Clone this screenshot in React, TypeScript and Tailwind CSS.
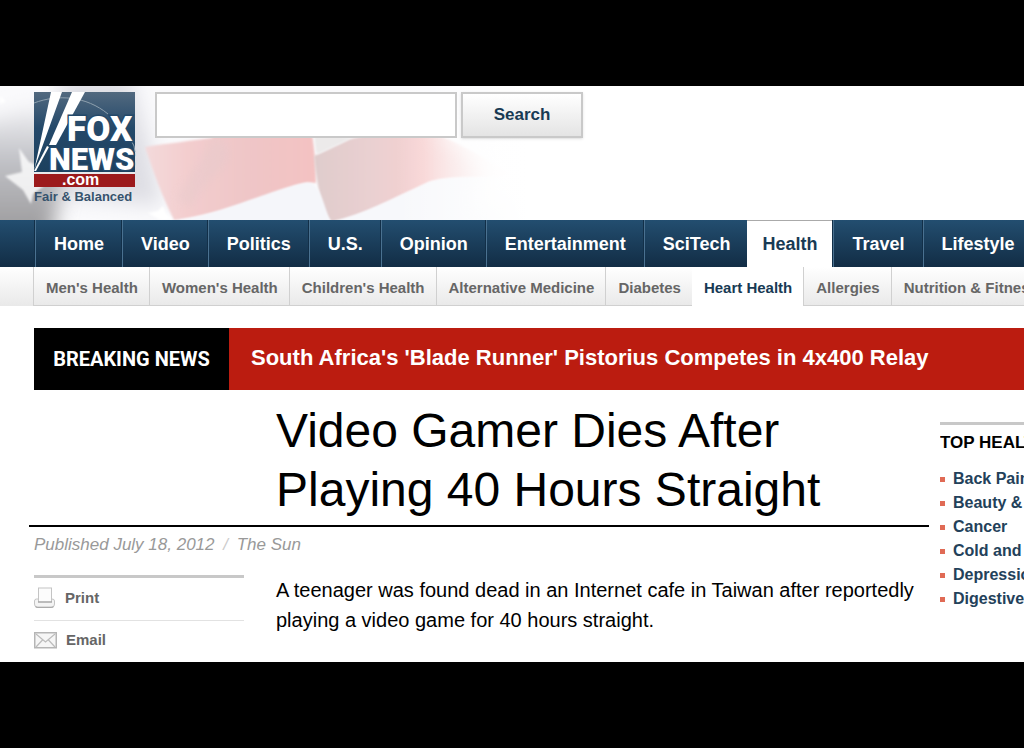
type NavItem = {
  label: string;
  active?: boolean;
};

const sections: NavItem[] = [
  { label: "Home" },
  { label: "Video" },
  { label: "Politics" },
  { label: "U.S." },
  { label: "Opinion" },
  { label: "Entertainment" },
  { label: "SciTech" },
  { label: "Health", active: true },
  { label: "Travel" },
  { label: "Lifestyle" },
];

const topics: NavItem[] = [
  { label: "Men's Health" },
  { label: "Women's Health" },
  { label: "Children's Health" },
  { label: "Alternative Medicine" },
  { label: "Diabetes" },
  { label: "Heart Health", active: true },
  { label: "Allergies" },
  { label: "Nutrition & Fitness" },
];

const topHealth = ["Back Pain", "Beauty & Skin", "Cancer", "Cold and Flu", "Depression", "Digestive"];

function FlagBackdrop() {
  return (
    <svg
      className="absolute inset-y-0 left-0 h-full w-[528px]"
      viewBox="0 0 528 134"
      preserveAspectRatio="xMinYMin slice"
      aria-hidden="true"
    >
      <defs>
        <linearGradient id="field" x1="0" y1="0" x2="0" y2="1">
          <stop offset="0" stopColor="#f0f0f3" />
          <stop offset="0.4" stopColor="#bfc0c5" />
          <stop offset="1" stopColor="#959495" />
        </linearGradient>
        <linearGradient id="fade" x1="0" y1="0" x2="1" y2="0">
          <stop offset="0.75" stopColor="#fff" stopOpacity="0" />
          <stop offset="1" stopColor="#fff" />
        </linearGradient>
        <linearGradient id="stripeA" x1="0" y1="0" x2="1" y2="0">
          <stop offset="0" stopColor="#f3dadb" />
          <stop offset="0.25" stopColor="#f3cdce" />
          <stop offset="0.6" stopColor="#efc6c7" />
          <stop offset="1" stopColor="#f4c2c2" />
        </linearGradient>
        <linearGradient id="stripeB" x1="0" y1="0" x2="1" y2="0">
          <stop offset="0" stopColor="#dfcccc" />
          <stop offset="0.3" stopColor="#ead0d1" />
          <stop offset="0.55" stopColor="#f7cfcf" />
          <stop offset="0.8" stopColor="#f8e8e8" />
          <stop offset="1" stopColor="#fdfbfb" />
        </linearGradient>
        <filter id="soft" x="-30%" y="-30%" width="160%" height="160%">
          <feGaussianBlur stdDeviation="10" />
        </filter>
        <filter id="mid" x="-20%" y="-20%" width="140%" height="140%">
          <feGaussianBlur stdDeviation="4" />
        </filter>
        <filter id="edge" x="-5%" y="-5%" width="110%" height="110%">
          <feGaussianBlur stdDeviation="1" />
        </filter>
      </defs>
      <rect width="528" height="134" fill="#fafafc" />
      <path d="M60 -10H130L150 60L162 120L60 110Z" fill="#dedee4" filter="url(#soft)" />
      <path d="M-30 40L40 20L70 60L50 160H-30Z" fill="url(#field)" filter="url(#soft)" />
      <path
        d="M145 61C170 57 190 55 212 52L225 30L305 14C314 50 316 75 316 97C300 95 285 104 250 115C225 124 200 131 174 134C162 110 153 85 145 61Z"
        fill="url(#stripeA)"
        filter="url(#edge)"
      />
      <path
        d="M215 50C235 60 235 75 210 94L190 122L176 112Z"
        fill="#e4cacc"
        opacity="0.4"
        filter="url(#mid)"
      />
      <path
        d="M314 70L350 53L410 40C450 50 480 70 515 90C480 92 440 90 425 98C390 114 365 128 332 136C322 125 317 100 314 70Z"
        fill="url(#stripeB)"
        filter="url(#edge)"
      />
      <path d="M425 98C390 114 365 128 332 136H528V94C480 92 445 88 425 98Z" fill="#f7f8fb" filter="url(#edge)" />
      <path d="M460 40H528V120H470C500 90 480 70 430 45Z" fill="#fff" opacity="0.7" filter="url(#soft)" />
      <path d="M318 68L352 52L314 46L316 66Z" fill="#eceaea" filter="url(#edge)" />
      <path d="M180 134C225 127 270 104 305 97C318 94 322 112 330 136H180Z" fill="#f5f6fa" filter="url(#edge)" />
      <path d="M19 62L29 76L44 82V100L33 108L31 118L23 104L5 90L22 86Z" fill="#fff" opacity="0.8" filter="url(#edge)" />
      <path d="M0 10L6 15L0 18Z" fill="#fff" filter="url(#edge)" />
      <path d="M148 127L158 125L163 120L166 127L173 134H160Z" fill="#fff" filter="url(#edge)" />
      <rect width="528" height="134" fill="url(#fade)" />
    </svg>
  );
}

function Logo() {
  return (
    <svg className="h-[112px] w-[102px] shrink-0" viewBox="0 0 102 112" role="img" aria-label="Fox News">
      <defs>
        <linearGradient id="logoBlue" x1="0" y1="0" x2="0" y2="1">
          <stop offset="0" stopColor="#52697f" />
          <stop offset="0.45" stopColor="#24496a" />
          <stop offset="1" stopColor="#1c405e" />
        </linearGradient>
      </defs>
      <rect width="101" height="80" fill="url(#logoBlue)" />
      <path d="M0 11C24 2 52 4 74 22M97 48Q101 54 101 60" fill="none" stroke="#8ea0ae" strokeWidth="1" />
      <path d="M17 0H28L2 72L0 79Z" fill="#fff" />
      <path d="M38 0H51L22 53H15Z" fill="#fff" />
      <path d="M13 54L15 55L2 79H0Z" fill="#fff" />
      <g
        fontFamily="Roboto, 'Liberation Sans', sans-serif"
        fontWeight="900"
        fill="#fff"
        stroke="#24496a"
        strokeWidth="3"
        paintOrder="stroke"
      >
        <text x="33" y="49" fontSize="35">FOX</text>
        <text x="15" y="78" fontSize="31">NEWS</text>
      </g>
      <rect y="80" width="101" height="2" fill="#e9e9ec" />
      <rect y="82" width="101" height="13" fill="#9c1a1c" />
      <text x="28" y="93" fontFamily="'Liberation Sans', sans-serif" fontWeight="700" fontSize="16" fill="#fff">
        .com
      </text>
      <text x="0" y="109" fontFamily="'Liberation Sans', sans-serif" fontWeight="700" fontSize="13" fill="#36536d">
        Fair &amp; Balanced
      </text>
    </svg>
  );
}

function PrintIcon() {
  return (
    <svg className="h-[22px] w-[22px]" viewBox="0 0 22 22" fill="none" aria-hidden="true">
      <path d="M4 12H2.5Q0.5 12 0.5 14V17Q0.5 20 3 20H18Q20.5 20 20.5 17V14Q20.5 12 18 12Z" fill="#f4f4f4" stroke="#c4c4c4" />
      <path d="M1.5 19.5Q2 20.5 4 20.5H17Q19 20.5 19.5 19.5" stroke="#aaa" strokeWidth="1.2" />
      <rect x="4.5" y="1" width="13" height="14" fill="#fcfcfc" stroke="#c4c4c4" />
      <path d="M4 15H18" stroke="#999" />
    </svg>
  );
}

function MailIcon() {
  return (
    <svg className="h-[17px] w-[23px]" viewBox="0 0 23 17" fill="none" aria-hidden="true">
      <rect x="0.75" y="0.75" width="21.5" height="15" fill="#f6f6f6" stroke="#b5b5b5" strokeWidth="1.5" />
      <path d="M2 2L11.5 10L21 2M2 15L8.5 8M21 15L14.5 8" stroke="#bcbcbc" strokeWidth="1.2" />
    </svg>
  );
}

function SiteHeader() {
  return (
    <header className="relative flex h-[134px] items-start pl-[34px] pt-[6px]">
      <FlagBackdrop />
      <div className="relative flex items-start">
        <a href="#home">
          <Logo />
        </a>
        <form className="ml-[19px] flex gap-1" onSubmit={(e) => e.preventDefault()}>
          <input
            type="search"
            aria-label="Search the site"
            className="h-[46px] w-[302px] border-2 border-[#c9c9c9] bg-white px-2 font-normal outline-none"
          />
          <button
            type="submit"
            className="h-[46px] w-[122px] border-2 border-[#c9c9c9] bg-linear-to-b from-white to-[#e4e4e4] text-[17px] font-bold text-[#183a54] shadow"
          >
            Search
          </button>
        </form>
      </div>
    </header>
  );
}

function MainNav() {
  return (
    <nav className="h-[47px] bg-linear-to-b from-[#234e70] to-[#122d45] pl-[34px]">
      <ul className="flex h-full">
        {sections.map(({ label, active }) => (
          <li key={label} className={active ? "border-t border-[#aaa] bg-white" : "border-l border-[#122f48]"}>
            <a
              href="#section"
              className={`flex h-full items-center whitespace-nowrap text-lg font-bold ${
                active ? "px-[15px] text-[#183a54]" : "border-l border-[#4a7190] pl-[18px] pr-[17px] text-white"
              }`}
            >
              {label}
            </a>
          </li>
        ))}
      </ul>
    </nav>
  );
}

function TopicNav() {
  return (
    <nav className="h-[39px] bg-linear-to-b from-white to-[#e9e9e9] pl-[33px]">
      <ul className="flex h-full">
        {topics.map(({ label, active }) => (
          <li key={label} className={active ? "border-b border-white bg-white" : "border-b border-l border-[#d0d0d0]"}>
            <a
              href="#topic"
              className={`flex h-full items-center whitespace-nowrap pl-3 pr-[11px] pt-1 text-[15px] font-bold ${
                active ? "text-[#183a54]" : "text-[#666]"
              }`}
            >
              {label}
            </a>
          </li>
        ))}
      </ul>
    </nav>
  );
}

function BreakingNews() {
  return (
    <section className="ml-[34px] mt-[22px] flex h-[62px] bg-[#bb1c10] text-white">
      <h2 className="flex w-[195px] shrink-0 items-center justify-center bg-black font-[Roboto,'Liberation_Sans',sans-serif] text-xl font-bold">
        BREAKING NEWS
      </h2>
      <a href="#breaking" className="flex items-center whitespace-nowrap pb-1 pl-[22px] text-[22px] font-bold">
        South Africa's 'Blade Runner' Pistorius Competes in 4x400 Relay
      </a>
    </section>
  );
}

function Article() {
  return (
    <article className="min-w-0 flex-1 pl-[29px]">
      <h1 className="border-b-2 border-black pb-[6px] pl-[247px] pt-[11px] text-5xl leading-[59px] text-black">
        Video Gamer Dies After
        <br />
        Playing 40 Hours Straight
      </h1>
      <p className="pl-[5px] pt-[6px] text-[17px] italic leading-6 text-[#999]">
        Published July 18, 2012 <span className="px-1 text-[#ccc]">/</span> The Sun
      </p>
      <div className="mt-[18px] flex gap-8 pl-[5px]">
        <ul className="w-[210px] shrink-0 border-t-[3px] border-[#c8c8c8] text-[15px] font-bold text-[#666]">
          <li className="border-b border-[#e2e2e2]">
            <button type="button" className="flex h-[42px] w-full items-center gap-[9px] pb-[2px]">
              <PrintIcon />
              Print
            </button>
          </li>
          <li>
            <button type="button" className="flex h-[41px] w-full items-center gap-[9px] pb-[2px]">
              <MailIcon />
              Email
            </button>
          </li>
        </ul>
        <p className="text-xl leading-[30px] text-black">
          A teenager was found dead in an Internet cafe in Taiwan after reportedly playing a video game for 40 hours
          straight.
        </p>
      </div>
    </article>
  );
}

function TopHealth() {
  return (
    <aside className="mt-[32px] w-[84px] shrink-0 overflow-hidden whitespace-nowrap border-t-[3px] border-[#c8c8c8]">
      <h2 className="pt-[6px] text-[17px] font-bold leading-6 text-black">TOP HEALTH</h2>
      <ul className="pt-3 text-base font-bold leading-6 text-[#23415a]">
        {topHealth.map((item) => (
          <li key={item} className="flex items-center gap-2">
            <span className="h-[5px] w-[5px] shrink-0 bg-[#e06a55]" />
            <a href="#topic">{item}</a>
          </li>
        ))}
      </ul>
    </aside>
  );
}

export default function App() {
  return (
    <div className="min-h-screen overflow-hidden bg-black py-[86px] font-['Liberation_Sans',Arial,sans-serif]">
      <div className="overflow-hidden bg-white">
        <SiteHeader />
        <MainNav />
        <TopicNav />
        <BreakingNews />
        <main className="flex gap-[11px]">
          <Article />
          <TopHealth />
        </main>
      </div>
    </div>
  );
}
